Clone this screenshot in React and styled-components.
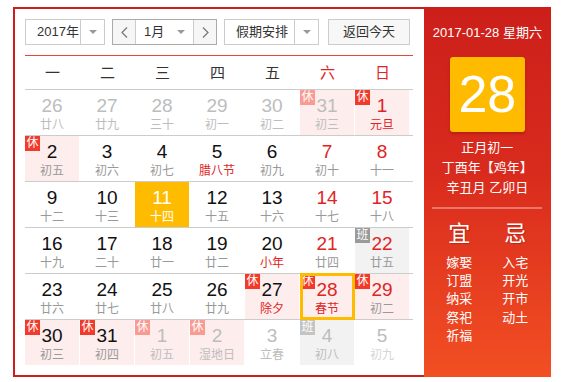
import React from "react";
import styled, { createGlobalStyle } from "styled-components";

const RED = "#e02424";

const weeks = [
  [
    { d: 26, l: "廿八", o: true },
    { d: 27, l: "廿九", o: true },
    { d: 28, l: "三十", o: true },
    { d: 29, l: "初一", o: true },
    { d: 30, l: "初二", o: true },
    { d: 31, l: "初三", o: true, tag: "休" },
    { d: 1, l: "元旦", we: true, fest: true, tag: "休" },
  ],
  [
    { d: 2, l: "初五", tag: "休" },
    { d: 3, l: "初六" },
    { d: 4, l: "初七" },
    { d: 5, l: "腊八节", fest: true },
    { d: 6, l: "初九" },
    { d: 7, l: "初十", we: true },
    { d: 8, l: "十一", we: true },
  ],
  [
    { d: 9, l: "十二" },
    { d: 10, l: "十三" },
    { d: 11, l: "十四", today: true },
    { d: 12, l: "十五" },
    { d: 13, l: "十六" },
    { d: 14, l: "十七", we: true },
    { d: 15, l: "十八", we: true },
  ],
  [
    { d: 16, l: "十九" },
    { d: 17, l: "二十" },
    { d: 18, l: "廿一" },
    { d: 19, l: "廿二" },
    { d: 20, l: "小年", fest: true },
    { d: 21, l: "廿四", we: true },
    { d: 22, l: "廿五", we: true, tag: "班" },
  ],
  [
    { d: 23, l: "廿六" },
    { d: 24, l: "廿七" },
    { d: 25, l: "廿八" },
    { d: 26, l: "廿九" },
    { d: 27, l: "除夕", fest: true, tag: "休" },
    { d: 28, l: "春节", we: true, fest: true, tag: "休", sel: true },
    { d: 29, l: "初二", we: true, tag: "休" },
  ],
  [
    { d: 30, l: "初三", tag: "休" },
    { d: 31, l: "初四", tag: "休" },
    { d: 1, l: "初五", o: true, tag: "休" },
    { d: 2, l: "湿地日", o: true, tag: "休" },
    { d: 3, l: "立春", o: true },
    { d: 4, l: "初八", o: true, tag: "班" },
    { d: 5, l: "初九", o: true, faded: true },
  ],
];

const weekdays = ["一", "二", "三", "四", "五", "六", "日"];
const yi = ["嫁娶", "订盟", "纳采", "祭祀", "祈福"];
const ji = ["入宅", "开光", "开市", "动土"];

export default function App() {
  const renderCell = (c, i) => {
    let bg = "transparent";
    if (c.tag === "休") bg = "#fdeded";
    if (c.tag === "班") bg = "#f2f2f2";
    if (c.today) bg = "#ffbb00";
    let numColor = "#111";
    if (c.we) numColor = RED;
    if (c.o) numColor = "#bdbdbd";
    if (c.today) numColor = "#fff";
    let lunarColor = "#999";
    if (c.fest) lunarColor = RED;
    if (c.o) lunarColor = c.faded ? "#d6d6d6" : "#bdbdbd";
    if (c.today) lunarColor = "#fff";
    return (
      <Cell key={i} $bg={bg}>
        {c.tag && (
          <Badge $kind={c.tag} $light={c.o}>
            {c.tag}
          </Badge>
        )}
        <DayNum $color={numColor}>{c.d}</DayNum>
        <Lunar $color={lunarColor}>{c.l}</Lunar>
        {c.sel && <Selected />}
      </Cell>
    );
  };

  return (
    <>
      <GlobalStyle />
      <Wrapper>
        <LeftPanel>
          <Toolbar>
            <Select $w={80}>
              <SelectText $pl={11}>2017年</SelectText>
              <ArrowBox>
                <Caret />
              </ArrowBox>
            </Select>
            <MonthGroup>
              <NavBtn>
                <svg width="7" height="11" viewBox="0 0 7 11">
                  <polyline points="6,0.5 1,5.5 6,10.5" fill="none" stroke="#777" strokeWidth="1.2" />
                </svg>
              </NavBtn>
              <MonthSelect>
                <SelectText $pl={8}>1月</SelectText>
                <Caret />
              </MonthSelect>
              <NavBtn $right>
                <svg width="7" height="11" viewBox="0 0 7 11">
                  <polyline points="1,0.5 6,5.5 1,10.5" fill="none" stroke="#777" strokeWidth="1.2" />
                </svg>
              </NavBtn>
            </MonthGroup>
            <Select $w={95}>
              <SelectText $pl={11}>假期安排</SelectText>
              <ArrowBox>
                <Caret />
              </ArrowBox>
            </Select>
            <TodayButton>返回今天</TodayButton>
          </Toolbar>
          <WeekHeader>
            {weekdays.map((w, i) => (
              <WeekDay key={w} $red={i >= 5}>
                {w}
              </WeekDay>
            ))}
          </WeekHeader>
          {weeks.map((w, i) => (
            <WeekRow key={i} $last={i === weeks.length - 1}>
              {w.map(renderCell)}
            </WeekRow>
          ))}
        </LeftPanel>
        <RightPanel>
          <DateLine>2017-01-28 星期六</DateLine>
          <BigDay>28</BigDay>
          <InfoLines>
            <div>正月初一</div>
            <div>丁酉年【鸡年】</div>
            <div>辛丑月 乙卯日</div>
          </InfoLines>
          <Divider />
          <Advice>
            <AdviceCol>
              <AdviceTitle>宜</AdviceTitle>
              {yi.map((t) => (
                <AdviceItem key={t}>{t}</AdviceItem>
              ))}
            </AdviceCol>
            <AdviceCol>
              <AdviceTitle>忌</AdviceTitle>
              {ji.map((t) => (
                <AdviceItem key={t}>{t}</AdviceItem>
              ))}
            </AdviceCol>
          </Advice>
        </RightPanel>
      </Wrapper>
    </>
  );
}

const GlobalStyle = createGlobalStyle`
  body {
    margin: 0;
    background: #fff;
    font-family: "Liberation Sans", Arial, "Noto Sans CJK SC", sans-serif;
  }
`;

const Wrapper = styled.div`
  display: flex;
  margin: 7px 0 0 13px;
  width: 538px;
  height: 370px;
  box-shadow: 0 3px 3px rgba(0, 0, 0, 0.05);
`;

const LeftPanel = styled.div`
  width: 396px;
  border: 2px solid #cc1f1a;
  border-right: none;
  padding: 10px 11px 0 10px;
`;

const Toolbar = styled.div`
  display: flex;
  align-items: center;
  height: 26px;
  padding-bottom: 10px;
  border-bottom: 1px solid #e0483d;
`;

const Select = styled.div`
  display: flex;
  box-sizing: border-box;
  width: ${(p) => p.$w}px;
  height: 26px;
  border: 1px solid #ccc;
  margin-right: 7px;
  background: #fff;
`;

const SelectText = styled.div`
  flex: 1;
  padding-left: ${(p) => p.$pl}px;
  font-size: 13px;
  line-height: 24px;
  color: #333;
`;

const ArrowBox = styled.div`
  width: 23px;
  border-left: 1px solid #ccc;
  display: flex;
  align-items: center;
  justify-content: center;
`;

const Caret = styled.span`
  width: 0;
  height: 0;
  border-left: 4px solid transparent;
  border-right: 4px solid transparent;
  border-top: 4px solid #999;
`;

const MonthGroup = styled.div`
  display: flex;
  box-sizing: border-box;
  width: 105px;
  height: 26px;
  border: 1px solid #aaa;
  margin-right: 7px;
`;

const NavBtn = styled.div`
  width: 22px;
  display: flex;
  align-items: center;
  justify-content: center;
  background: #f6f6f6;
  border-left: ${(p) => (p.$right ? "1px solid #ccc" : "none")};
  border-right: ${(p) => (p.$right ? "none" : "1px solid #ccc")};
`;

const MonthSelect = styled.div`
  flex: 1;
  display: flex;
  align-items: center;
  padding-right: 8px;
  background: #fff;
`;

const TodayButton = styled.div`
  box-sizing: border-box;
  width: 82px;
  height: 26px;
  margin-left: 2px;
  border: 1px solid #ccc;
  background: #f7f7f7;
  font-size: 13px;
  line-height: 24px;
  text-align: center;
  color: #333;
`;

const WeekHeader = styled.div`
  display: grid;
  grid-template-columns: repeat(7, 55px);
  height: 33px;
  border-bottom: 1px solid #ccc;
`;

const WeekDay = styled.div`
  text-align: center;
  font-size: 15px;
  line-height: 33px;
  color: ${(p) => (p.$red ? RED : "#333")};
`;

const WeekRow = styled.div`
  display: grid;
  grid-template-columns: repeat(7, 54px);
  column-gap: 1px;
  height: 45px;
  border-bottom: ${(p) => (p.$last ? "none" : "1px solid #ccc")};
`;

const Cell = styled.div`
  position: relative;
  height: 45px;
  background: ${(p) => p.$bg};
  text-align: center;
  padding-top: 5px;
  box-sizing: border-box;
`;

const Badge = styled.span`
  position: absolute;
  left: 0;
  top: 0;
  width: 15px;
  height: 15px;
  font-size: 12px;
  line-height: 15px;
  text-align: center;
  color: #fff;
  background: ${(p) =>
    p.$kind === "班"
      ? p.$light
        ? "#c4c4c4"
        : "#9a9a9a"
      : p.$light
      ? "#f99b93"
      : "#f23a2c"};
`;

const DayNum = styled.div`
  font-family: "Liberation Sans", Arial, sans-serif;
  font-size: 19px;
  line-height: 22px;
  color: ${(p) => p.$color};
`;

const Lunar = styled.div`
  font-size: 12px;
  line-height: 16px;
  color: ${(p) => p.$color};
`;

const Selected = styled.div`
  position: absolute;
  left: 0;
  right: -1px;
  top: -1px;
  bottom: -1px;
  border: 3px solid #ffbb00;
`;

const RightPanel = styled.div`
  width: 130px;
  height: 370px;
  display: flex;
  flex-direction: column;
  align-items: center;
  color: #fff;
  background: linear-gradient(180deg, #cc1f1a 0%, #d92b1d 45%, #f24f23 100%);
`;

const DateLine = styled.div`
  margin-top: 16px;
  font-size: 13px;
  line-height: 20px;
`;

const BigDay = styled.div`
  margin-top: 14px;
  width: 75px;
  height: 75px;
  border-radius: 3px;
  background: #ffbb00;
  box-shadow: 0 2px 3px rgba(120, 0, 0, 0.3);
  font-family: "Liberation Sans", Arial, sans-serif;
  font-size: 52px;
  line-height: 75px;
  text-align: center;
`;

const InfoLines = styled.div`
  margin-top: 6px;
  font-size: 13px;
  line-height: 20px;
  text-align: center;
`;

const Divider = styled.div`
  margin-top: 9px;
  width: 110px;
  height: 2px;
  background: rgba(255, 255, 255, 0.35);
`;

const Advice = styled.div`
  display: flex;
  gap: 30px;
  margin-top: 12px;
`;

const AdviceCol = styled.div`
  width: 26px;
  display: flex;
  flex-direction: column;
  align-items: center;
`;

const AdviceTitle = styled.div`
  font-size: 22px;
  line-height: 26px;
  margin-bottom: 7px;
  text-shadow: 1px 1px 1px rgba(0, 0, 0, 0.2);
`;

const AdviceItem = styled.div`
  font-size: 13px;
  line-height: 18.2px;
`;
